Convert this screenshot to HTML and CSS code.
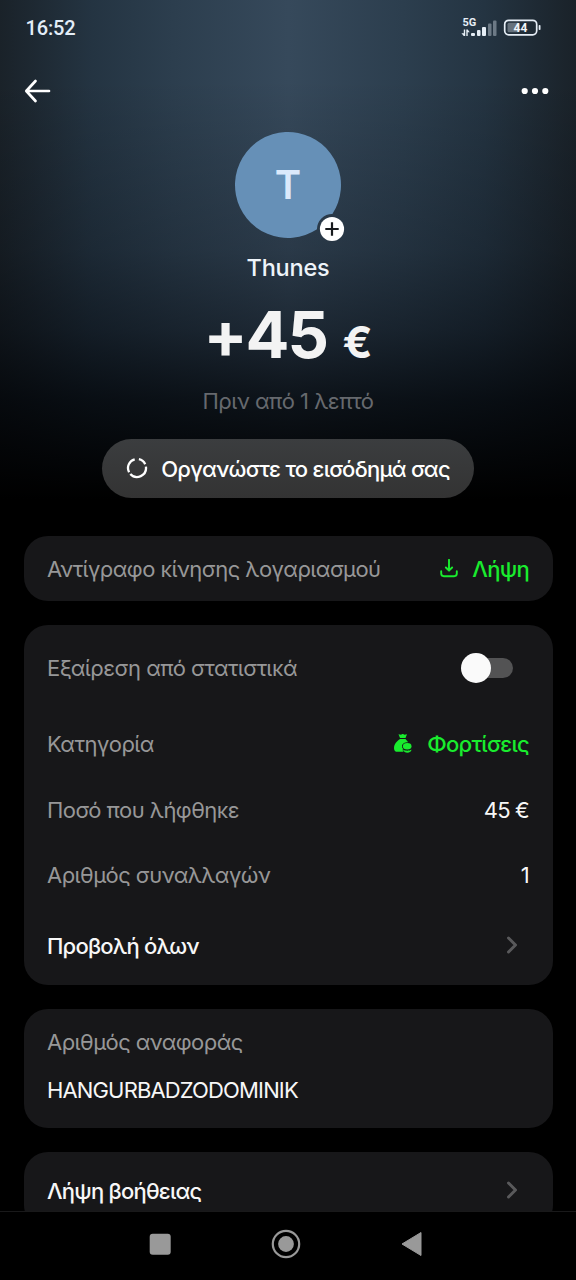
FILE: index.html
```html
<!DOCTYPE html>
<html lang="el">
<head>
<meta charset="utf-8">
<title>Thunes</title>
<link rel="stylesheet" href="styles.css">
</head>
<body>
<div class="screen">
  <div class="status">
    <span class="clock">16:52</span>
    <svg class="status-icons" width="82" height="24" viewBox="0 0 82 24">
      <text class="net" x="2.500" y="10">5G</text>
      <g fill="#e6eef6">
        <path d="M3.800 13.500h1.400v6.500H3.800l-2.400-2.800h2.400zM6.300 13.500h1.400l2 2.700H7.700V20H6.300z"/>
        <rect x="11" y="17" width="4" height="3" rx="1"/>
        <rect x="17" y="14" width="3.500" height="6" rx="1"/>
        <rect x="22" y="11" width="4" height="9" rx="1"/>
      </g>
      <g fill="#6d7a86">
        <rect x="28" y="7.500" width="3.500" height="12.500" rx="1"/>
        <rect x="33" y="4.500" width="3.500" height="15.500" rx="1"/>
      </g>
      <rect x="44.700" y="4.300" width="32" height="14.500" rx="4" fill="none" stroke="#e6eef6" stroke-width="1.700"/>
      <rect x="47.500" y="6.800" width="12" height="9.500" rx="1.500" fill="#66727d"/>
      <rect x="78.700" y="9" width="1.800" height="5" rx=".8" fill="#e6eef6"/>
      <text class="batt" x="60.500" y="16" text-anchor="middle">44</text>
    </svg>
  </div>
  <div class="topbar">
    <svg width="28" height="26" viewBox="0 0 28 26" fill="none" stroke="#fff" stroke-width="2.700" stroke-linecap="round" stroke-linejoin="round"><path d="M12.500 3 3.300 13 12.500 23M3.500 13h22.500"/></svg>
    <svg width="28" height="8" viewBox="0 0 28 8" fill="#fff"><circle cx="3.700" cy="4" r="3.100"/><circle cx="14" cy="4" r="3.100"/><circle cx="24.300" cy="4" r="3.100"/></svg>
  </div>
  <div class="hero">
    <div class="avatar">
      <svg class="disc" width="112" height="112" viewBox="0 0 112 112">
        <path fill="#6690b7" d="M97.370 81.990A53 53 0 1 0 81.990 97.370 15 15 0 0 1 97.370 81.990z"/>
        <circle cx="97" cy="97" r="12.100" fill="#fff"/>
        <path d="M97 90.300v13.400M90.300 97h13.400" stroke="#171a1d" stroke-width="2.200"/>
      </svg>
      <span class="initial">T</span>
    </div>
    <div class="name">Thunes</div>
    <div class="amount">+45<span class="currency">€</span></div>
    <div class="when">Πριν από 1 λεπτό</div>
    <div class="organize">
      <svg width="22" height="22" viewBox="0 0 22 22" fill="none" stroke="#fff" stroke-width="2.300"><path d="M12.900 1.200A9 9 0 0 1 19.200 6.200M19.900 8.700A9 9 0 0 1 4.300 16M3.050 14.200A9 9 0 0 1 8.700 1.300"/></svg>
      <span>Οργανώστε το εισόδημά σας</span>
    </div>
  </div>
  <div class="cards">
    <div class="card">
      <div class="row statement"><span class="label">Αντίγραφο κίνησης λογαριασμού</span>
        <span class="action"><svg width="18" height="20" viewBox="1 0 18 20" fill="none" stroke="#19ec2e" stroke-width="1.900" stroke-linecap="round" stroke-linejoin="round"><path d="M10 .8v10.700M6.900 8.500l3.100 3.200 3.100-3.200M2.200 12.300v2.300a2.600 2.600 0 0 0 2.600 2.600h10.400a2.600 2.600 0 0 0 2.600-2.600v-2.300"/></svg>Λήψη</span></div>
    </div>
    <div class="card details">
      <div class="row exclude"><span class="label">Εξαίρεση από στατιστικά</span><span class="toggle"><span class="knob"></span></span></div>
      <div class="row"><span class="label">Κατηγορία</span>
        <span class="action category"><svg width="20" height="20" viewBox="0 0 20 20" fill="#19ec2e"><path d="M5.500.2 8 .8l1.700-1L11.500.8l2.500-.6L12.500 4h-5.500z"/><path d="M7 5h5.500l2.700 3.200C11.500 8.200 9 9.700 9 12.200c0 1 .4 2 1 2.600-.5.900-.3 2 .5 3H4.500C2.300 17.800 1 16.700 1 14.200c0-4 3-7.200 6-9.200z"/><ellipse cx="14.200" cy="12.300" rx="4.300" ry="3.200"/><path d="M10.200 15.600c1.800 1.600 6.200 1.600 8.200 0 .4 4.200-8.400 4.200-8.200 0z"/></svg>Φορτίσεις</span></div>
      <div class="row"><span class="label">Ποσό που λήφθηκε</span><span class="value">45 €</span></div>
      <div class="row"><span class="label">Αριθμός συναλλαγών</span><span class="value">1</span></div>
      <div class="row all"><span class="link">Προβολή όλων</span><svg class="chev" width="14" height="20" viewBox="0 0 14 20"><path d="M3.500 2l7 7-7 7"/></svg></div>
    </div>
    <div class="card reference">
      <span class="label">Αριθμός αναφοράς</span>
      <span class="code">HANGURBADZODOMINIK</span>
    </div>
    <div class="card">
      <div class="row help"><span class="link">Λήψη βοήθειας</span><svg class="chev" width="14" height="20" viewBox="0 0 14 20"><path d="M3.500 2l7 7-7 7"/></svg></div>
    </div>
  </div>
  <div class="nav">
    <svg width="30" height="30" viewBox="0 0 30 30"><rect x="4.700" y="4.700" width="21" height="21" rx="3" fill="#999"/></svg>
    <svg width="30" height="30" viewBox="0 0 30 30"><circle cx="15" cy="15" r="13.200" fill="none" stroke="#999" stroke-width="2.200"/><circle cx="15" cy="15" r="7.900" fill="#999"/></svg>
    <svg width="30" height="30" viewBox="0 0 30 30"><path d="M5 15 24 3.500v23z" fill="#999" stroke="#999" stroke-linejoin="round"/></svg>
  </div>
</div>
</body>
</html>
```
FILE: styles.css
```css
* { box-sizing: border-box; }
body { margin: 0; background: #000; }
.screen {
  width: 576px;
  height: 1280px;
  overflow: hidden;
  display: flex;
  flex-direction: column;
  color: #f7f7f7;
  font: 22px/26px Inter, "Liberation Sans", sans-serif;
  letter-spacing: -.5px;
  background:
    linear-gradient(to bottom, rgba(0,0,0,0) 80px, rgba(0,2,6,.22) 250px, rgba(0,2,6,.46) 330px, rgba(0,2,5,.76) 400px, #000 500px),
    linear-gradient(to right, #1a2229, #243442 16%, #2c3e4e 30%, #36495b 50%, #2c3e4e 70%, #243442 84%, #1a2229);
}
svg { display: block; flex: none; }
.status {
  height: 56px;
  padding: 0 34px 0 25.500px;
  display: flex;
  align-items: center;
  justify-content: space-between;
}
.clock { font: 500 20px/24px Roboto, sans-serif; letter-spacing: -.15px; color: #e3edf7; }
.net { font: 700 11px Roboto, sans-serif; letter-spacing: 0; fill: #e6eef6; }
.batt { font: 700 12px Roboto, sans-serif; letter-spacing: 0; fill: #f2f6fa; }
.topbar {
  height: 70px;
  padding: 0 27px 0 22.500px;
  display: flex;
  align-items: center;
  justify-content: space-between;
}
.hero { height: 409.500px; display: flex; flex-direction: column; align-items: center; }
.avatar {
  width: 106px;
  height: 106px;
  margin-top: 6px;
  display: grid;
  place-items: center;
  position: relative;
}
.disc { position: absolute; left: 0; top: 0; }
.initial { position: relative; font-size: 40px; font-weight: 600; letter-spacing: 0; color: #dbe9fb; }
.name { margin-top: 16px; font-size: 23.500px; line-height: 28px; font-weight: 500; letter-spacing: -.2px; color: #eef4fa; }
.amount { margin-top: 16px; height: 74px; font-size: 65px; line-height: 74px; font-weight: 700; letter-spacing: -2px; color: #f3f3f3; }
.currency { margin-left: 15.500px; font-size: 44px; letter-spacing: 0; }
.when { margin-top: 16px; line-height: 26px; color: #66696e; }
.organize {
  margin-top: 25px;
  width: 372px;
  height: 59px;
  border-radius: 30px;
  display: flex;
  align-items: center;
  justify-content: center;
  gap: 13px;
  font-weight: 500;
  letter-spacing: -.74px;
  color: #fff;
  background: linear-gradient(#3b3d3f, #333);
}
.cards { height: 675.500px; overflow: hidden; padding: 0 23.500px; display: flex; flex-direction: column; gap: 24px; }
.card { flex: none; padding: 0 23.500px; border-radius: 24px; background: #171719; }
.details { height: 360px; padding-top: 10px; }
.row { height: 65.500px; display: flex; align-items: center; justify-content: space-between; }
.label { color: #979798; letter-spacing: -.55px; }
.value { letter-spacing: -.8px; }
.statement { padding-top: 1px; }
.exclude { height: 76.500px; padding: 0 16px 11px 0; }
.action { display: flex; align-items: center; gap: 14.500px; font-weight: 500; letter-spacing: -.7px; color: #19ec2e; }
.toggle { width: 52px; height: 30px; display: grid; align-items: center; }
.toggle::before { content: ""; grid-area: 1 / 1; justify-self: end; width: 36px; height: 20px; border-radius: 10px; background: #535354; }
.knob { grid-area: 1 / 1; width: 30px; height: 30px; border-radius: 50%; background: #fafafa; }
.link { font-weight: 500; letter-spacing: -.78px; }
.all { height: 76.500px; }
.chev { margin-right: 10px; fill: none; stroke: #59595b; stroke-width: 3; stroke-linecap: round; stroke-linejoin: round; }
.reference { height: 119px; padding-top: 20px; display: flex; flex-direction: column; gap: 22px; }
.code { letter-spacing: -.85px; }
.help { height: 77px; }
.nav {
  height: 69px;
  border-top: 1px solid #19191a;
  background: #000;
  padding: 0 149px 4px 145px;
  display: flex;
  align-items: center;
  justify-content: space-between;
}
```
